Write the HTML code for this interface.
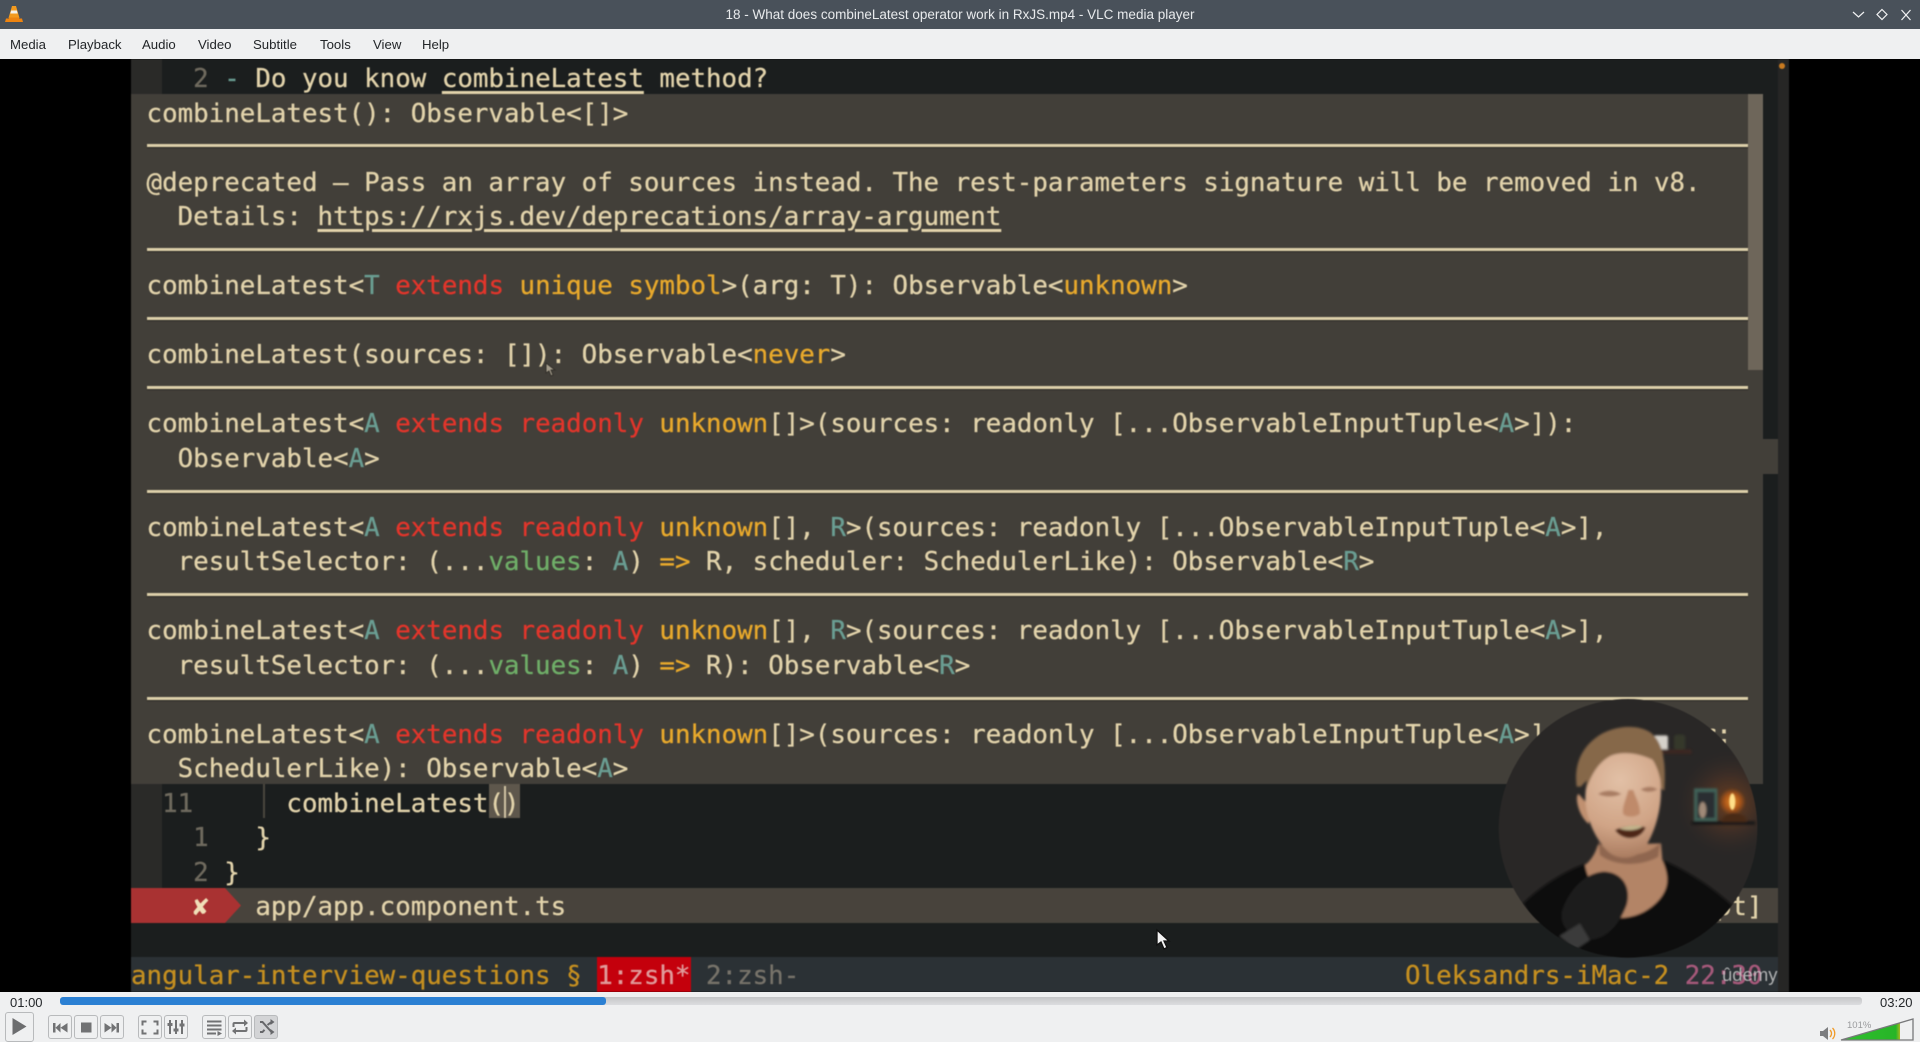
<!DOCTYPE html>
<html><head><meta charset="utf-8"><title>VLC media player</title>
<style>
html,body{margin:0;padding:0;width:1920px;height:1042px;overflow:hidden;background:#eff0f1}
body{position:relative;font-family:"Liberation Sans",sans-serif}
.abs{position:absolute}
#title{left:0;top:0;width:1920px;height:29px;background:#49515a;color:#e8eaec;font-size:13.5px;line-height:29px;text-align:center}
#menu{left:0;top:29px;width:1920px;height:30px;background:#eff0f1}
#menu span{position:absolute;top:1px;line-height:30px;font-size:13.2px;color:#232629}
#video{left:0;top:59px;width:1920px;height:933px;background:#000;overflow:hidden}
#vin{position:absolute;left:0;top:-59px;width:1920px;height:1042px;filter:blur(.4px)}
.r{position:absolute;left:131px;top:calc(62.3px + 34.5px*var(--i));height:34.5px;line-height:34.5px;white-space:pre;font-family:"DejaVu Sans Mono",monospace;font-size:25.82px;color:#e2d3ab;-webkit-text-stroke:.3px currentColor}
.ln{position:absolute;left:147px;width:1601px;height:3px;background:#dccfa9;box-shadow:0 1px 1px #2e2b25}
.d{color:#e2352b}.o{color:#e8a92c}.t{color:#6a9d92}.g{color:#6fae68}.u{text-decoration:underline;text-decoration-thickness:2.5px;text-underline-offset:4px}
.n{color:#6f6a5e}
.btn{position:absolute;top:1015px;height:22px;width:22px;border:1px solid #b8babc;border-radius:3px;background:#eff0f1;box-sizing:content-box}
.btn svg{display:block;width:22px;height:22px}
</style></head>
<body>
<div class="abs" id="title">18 - What does combineLatest operator work in RxJS.mp4 - VLC media player</div>
<svg class="abs" style="left:4px;top:4px" width="20" height="20" viewBox="0 0 20 20"><path d="M8 2h4l3.500 12h-11z" fill="#f39a1e"/><path d="M7.100 6.500h5.800l.8 3H6.300z" fill="#f4f1ea"/><path d="M2 14.500h3v-1h10v1h3l1 3.500H1z" fill="#ee8410"/></svg>
<svg class="abs" style="left:1846px;top:6px" width="72" height="18" viewBox="0 0 72 18" fill="none" stroke="#f2f3f4" stroke-width="1.200"><path d="M7 6l5.500 5 5.500-5"/><path d="M36 3.500l5 5-5 5-5-5z"/><path d="M55.500 4l9 10M64.500 4l-9 10"/></svg>
<div class="abs" id="menu"><span style="left:10px">Media</span><span style="left:68px">Playback</span><span style="left:142px">Audio</span><span style="left:198px">Video</span><span style="left:253px">Subtitle</span><span style="left:320px">Tools</span><span style="left:373px">View</span><span style="left:422px">Help</span></div>

<div class="abs" id="video"><div id="vin">
<div class="abs" style="left:131px;top:59px;width:1647px;height:933px;background:#1b1e1e"></div>
<div class="abs" style="left:1778px;top:59px;width:11px;height:933px;background:#262625"></div>
<div class="abs" style="left:131px;top:59px;width:31px;height:35px;background:#2a2a28"></div>
<div class="abs" style="left:131px;top:784px;width:31px;height:104px;background:#2a2a28"></div>
<div class="abs" style="left:131px;top:94px;width:1632px;height:690px;background:#423f39"></div>
<div class="abs" style="left:1763px;top:439px;width:15px;height:34.500px;background:#423f39"></div>
<div class="abs" style="left:1748px;top:94px;width:15px;height:276px;background:#6e665a"></div>
<div class="abs" style="left:1779px;top:63px;width:6px;height:6px;border-radius:50%;background:#c87a20"></div>

<div class="ln" style="top:144px"></div><div class="ln" style="top:248px"></div><div class="ln" style="top:317px"></div><div class="ln" style="top:386px"></div><div class="ln" style="top:490px"></div><div class="ln" style="top:593px"></div><div class="ln" style="top:697px"></div>

<div class="r" style="--i:0"><span class="n">    2 </span><span style="color:#6a9d92">-</span> Do you know <span class="u">combineLatest</span> method?</div>
<div class="r" style="--i:1"> combineLatest(): Observable&lt;[]&gt;</div>
<div class="r" style="--i:3"> @deprecated — Pass an array of sources instead. The rest-parameters signature will be removed in v8.</div>
<div class="r" style="--i:4">   Details: <span class="u">https://rxjs.dev/deprecations/array-argument</span></div>
<div class="r" style="--i:6"> combineLatest&lt;<span class="t">T</span> <span class="d">extends</span> <span class="o">unique symbol</span>&gt;(arg: T): Observable&lt;<span class="o">unknown</span>&gt;</div>
<div class="r" style="--i:8"> combineLatest(sources: []): Observable&lt;<span class="o">never</span>&gt;</div>
<div class="r" style="--i:10"> combineLatest&lt;<span class="t">A</span> <span class="d">extends</span> <span class="d">readonly</span> <span class="o">unknown</span>[]&gt;(sources: readonly [...ObservableInputTuple&lt;<span class="t">A</span>&gt;]):</div>
<div class="r" style="--i:11">   Observable&lt;<span class="t">A</span>&gt;</div>
<div class="r" style="--i:13"> combineLatest&lt;<span class="t">A</span> <span class="d">extends</span> <span class="d">readonly</span> <span class="o">unknown</span>[], <span class="t">R</span>&gt;(sources: readonly [...ObservableInputTuple&lt;<span class="t">A</span>&gt;],</div>
<div class="r" style="--i:14">   resultSelector: (...<span class="g">values</span>: <span class="t">A</span>) <span class="o">=&gt;</span> R, scheduler: SchedulerLike): Observable&lt;<span class="t">R</span>&gt;</div>
<div class="r" style="--i:16"> combineLatest&lt;<span class="t">A</span> <span class="d">extends</span> <span class="d">readonly</span> <span class="o">unknown</span>[], <span class="t">R</span>&gt;(sources: readonly [...ObservableInputTuple&lt;<span class="t">A</span>&gt;],</div>
<div class="r" style="--i:17">   resultSelector: (...<span class="g">values</span>: <span class="t">A</span>) <span class="o">=&gt;</span> R): Observable&lt;<span class="t">R</span>&gt;</div>
<div class="r" style="--i:19"> combineLatest&lt;<span class="t">A</span> <span class="d">extends</span> <span class="d">readonly</span> <span class="o">unknown</span>[]&gt;(sources: readonly [...ObservableInputTuple&lt;<span class="t">A</span>&gt;], scheduler:</div>
<div class="r" style="--i:20">   SchedulerLike): Observable&lt;<span class="t">A</span>&gt;</div>

<div class="abs" style="left:263px;top:784px;width:1.500px;height:34px;background:#4a463e"></div>
<div class="abs" style="left:489px;top:784px;width:31px;height:34px;background:#5e574c"></div>
<div class="r" style="--i:21"><span class="n">  11</span>      combineLatest()</div>
<div class="abs" style="left:503.500px;top:786px;width:2px;height:32px;background:#cfc3a3"></div>
<div class="r" style="--i:22"><span class="n">    1</span>   }</div>
<div class="r" style="--i:23"><span class="n">    2</span> }</div>

<div class="abs" style="left:131px;top:888px;width:1647px;height:34.500px;background:#48433c"></div>
<svg class="abs" style="left:131px;top:888px" width="110" height="35"><path d="M0 0H94L110 17.500 94 35H0z" fill="#a93232"/></svg>
<div class="r" style="--i:24">    <b style="color:#f0dfb8">✘</b>   app/app.component.ts</div>
<div class="r" style="--i:24;left:1576px">[typescript]</div>

<div class="abs" style="left:131px;top:957px;width:1647px;height:35px;background:#2b3135"></div>
<div class="abs" style="left:597px;top:957px;width:94px;height:35px;background:#c4000c"></div>
<div class="r" style="--i:26;color:#c58f20">angular-interview-questions § <span style="color:#e09a9a">1:zsh*</span> <span style="color:#77736a">2:zsh-</span></div>
<div class="r" style="--i:26;left:1405px;color:#c58f20">Oleksandrs-iMac-2 <span style="color:#a5597a">22:30</span></div>
<div class="abs" style="left:1722px;top:961px;font-size:18.500px;line-height:28px;color:#cfcfcf;opacity:.8">ûdemy</div>

<!-- presenter -->
<svg class="abs" style="left:1480px;top:690px" width="320" height="280" viewBox="0 0 960 840">
<defs>
<clipPath id="c"><circle cx="444" cy="415" r="388"/></clipPath>
<radialGradient id="gl" cx="750" cy="340" r="170" gradientUnits="userSpaceOnUse"><stop offset="0" stop-color="#6a3e20"/><stop offset=".5" stop-color="#3e2e26"/><stop offset="1" stop-color="#292726" stop-opacity="0"/></radialGradient>
<radialGradient id="fl" cx="757" cy="335" r="40" gradientUnits="userSpaceOnUse"><stop offset="0" stop-color="#e88a2a"/><stop offset=".6" stop-color="#a85418"/><stop offset="1" stop-color="#a85418" stop-opacity="0"/></radialGradient>
<radialGradient id="sk" cx="420" cy="270" r="240" gradientUnits="userSpaceOnUse"><stop offset="0" stop-color="#e2c0a6"/><stop offset=".6" stop-color="#d0a486"/><stop offset="1" stop-color="#a87a5e"/></radialGradient>
<filter id="b"><feGaussianBlur stdDeviation="3.500"/></filter>
<filter id="b2"><feGaussianBlur stdDeviation="2"/></filter>
</defs>
<g clip-path="url(#c)">
<rect width="960" height="840" fill="#292726"/>
<rect width="960" height="840" fill="url(#gl)"/>
<g filter="url(#b)">
<rect x="522" y="136" width="42" height="44" rx="6" fill="#d6d2ca"/>
<rect x="582" y="134" width="34" height="46" rx="8" fill="#34382c"/>
<rect x="535" y="178" width="100" height="14" fill="#3a2820"/>
<rect x="642" y="295" width="70" height="98" fill="#3f6258"/>
<rect x="652" y="306" width="52" height="78" fill="#2b2f30"/>
<ellipse cx="668" cy="360" rx="11" ry="24" fill="#a08a78"/>
<rect x="635" y="394" width="190" height="10" fill="#191513"/>
<circle cx="757" cy="335" r="40" fill="url(#fl)"/>
<path d="M725 392c8-26 52-34 75-4v8h-75z" fill="#4a2a18"/>
<path d="M130 640c50-50 130-100 185-118l232-12c70 30 150 80 213 140L600 860 250 860z" fill="#0b0a0a"/>
<path d="M315 525c12-8 30-30 38-60l190-5 4 50c22 50 22 90-20 130-30 28-65 42-107 44-50-40-95-100-105-159z" fill="#b38466"/>
<path d="M355 455c40 50 130 55 185 5l-5 40c-50 30-130 30-175-5z" fill="#8f6650"/>
<path d="M290 290c-8-60 10-110 55-145 50-40 130-45 170-15 32 28 44 80 38 170-6 10-50-60-60-70-60-20-130-10-190 60z" fill="#86684a"/>
<path d="M296 312c-12 2-4 62 30 90l10-45z" fill="#c09070"/>
<path d="M316 330c0-80 25-140 95-166 60-10 112 20 130 105 8 70-10 150-50 210-32 32-80 32-110 3-40-42-62-100-65-152z" fill="url(#sk)"/>
<path d="M318 300c2-60 28-115 90-138 50-8 90 8 115 50-40-22-95-30-130-15-40 20-60 60-75 103z" fill="#86684a"/>
<path d="M354 312c22-14 50-12 70 0-20 10-50 10-70 0zM482 298c18-10 38-10 50 0-16 10-36 10-50 0z" fill="#a87c62"/>
<path d="M445 300c-8 30-20 55-15 72 10 12 40 10 50-2 0-30-15-50-20-70z" fill="#bf8a6a"/>
<path d="M405 420c30-14 65-16 92-8-8 22-30 34-52 32-18-2-32-12-40-24z" fill="#4d2618"/>
<path d="M418 415c25-8 48-10 70-6-12 12-50 16-70 6z" fill="#c2b48c"/>
<path d="M245 665c15-50 60-115 125-120 55 0 85 45 70 100-25 65-60 100-112 105-60-5-90-45-83-85z" fill="#1c1b1a"/>
<path d="M238 738l62-38 30 50-42 28z" fill="#3a3a3a"/>
<path d="M175 668l75 42-12 28-75-50zM285 780l45-30 30 60-55 20z" fill="#0a0a0a"/>
</g>
<g filter="url(#b2)"><ellipse cx="757" cy="335" rx="9" ry="25" fill="#ffe08a"/></g>
</g>
</svg>
<svg class="abs" style="left:545px;top:362px;opacity:.7" width="14" height="16" viewBox="0 0 14 16"><path d="M1 1v10l3-2 2 5 2-1-2-5h4z" fill="#cfc6b0" stroke="#2e2b25"/></svg>
</div></div>

<svg class="abs" style="left:1155px;top:928px" width="18" height="24" viewBox="0 0 18 24"><path d="M2 2v15l4-3 3 7 3-1.500-3-6.500h5z" fill="#f3f3f3" stroke="#111" stroke-width="1.300"/></svg>

<div class="abs" style="left:10px;top:994px;font-size:13px;line-height:17px;color:#232629">01:00</div>
<div class="abs" style="left:60px;top:997px;width:1802px;height:8px;border-radius:3px;background:linear-gradient(#c5c6c8,#dcdde0)"></div>
<div class="abs" style="left:60px;top:997px;width:546px;height:8px;border-radius:3px;background:#2b80d3"></div>
<div class="abs" style="left:1880px;top:994px;font-size:13px;line-height:17px;color:#232629">03:20</div>

<div class="abs" style="left:5px;top:1012px;width:27px;height:28px;border:1px solid #b8babc;border-radius:3px"></div>
<svg class="abs" style="left:12px;top:1018px" width="15" height="17"><path d="M.5 0l14 8.500L.5 17z" fill="#6c6d6f"/></svg>

<div class="btn" style="left:48px"><svg viewBox="0 0 22 22" fill="#717274"><path d="M4 7h2.500v9.500H4zM11.500 7v9.500L6.500 11.750zM18.500 7v9.500l-7-4.750z"/></svg></div>
<div class="btn" style="left:74px"><svg viewBox="0 0 22 22" fill="#717274"><path d="M6 6.500h10.500v10H6z"/></svg></div>
<div class="btn" style="left:100px"><svg viewBox="0 0 22 22" fill="#717274"><path d="M3.500 7l7 4.750-7 4.750zM10.500 7l5 4.750-5 4.750zM15.500 7H18v9.500h-2.500z"/></svg></div>
<div class="btn" style="left:138px"><svg viewBox="0 0 22 22" fill="none" stroke="#717274" stroke-width="2"><path d="M3.500 9.500V5.500h4M14.500 5.500h4v4M18.500 13.500v4h-4M7.500 17.500h-4v-4"/></svg></div>
<div class="btn" style="left:164px"><svg viewBox="0 0 22 22" fill="none" stroke="#717274" stroke-width="2"><path d="M5 4v14M11 4v14M17 4v14"/><path d="M2.500 8.500h5M8.500 14h5M14.500 9h5" stroke-width="3"/></svg></div>
<div class="btn" style="left:202px"><svg viewBox="0 0 22 22" fill="none" stroke="#717274" stroke-width="2"><path d="M4 5.500h14.500M4 9.500h14.500M4 13.500h14.500M4 17.500h9"/><path d="M14.500 15l4.500 2.500-4.500 2.500z" fill="#717274" stroke="none"/></svg></div>
<div class="btn" style="left:228px"><svg viewBox="0 0 22 22" fill="none" stroke="#717274" stroke-width="2"><path d="M4.500 11V8a1 1 0 0 1 1-1h10M17.500 11v3a1 1 0 0 1-1 1h-10"/><path d="M15 3.500l4 3.500-4 3.500zM7 11.500L3 15l4 3.500z" fill="#717274" stroke="none"/></svg></div>
<div class="btn" style="left:254px;background:#d3d4d6"><svg viewBox="0 0 22 22" fill="none" stroke="#66676a" stroke-width="2"><path d="M5 6h2.500l9 10M5 16h2.500l2-2.200M12.500 9l4-3"/><path d="M15.500 3l4 3-4 3zM15.500 13l4 3-4 3z" fill="#66676a" stroke="none"/></svg></div>

<svg class="abs" style="left:1819px;top:1025px" width="18" height="17" viewBox="0 0 18 17"><path d="M1 6h3l5-4v13l-5-4H1z" fill="#7c7d7f"/><path d="M11 5c2 2 2 5 0 7M13.500 3c3 3 3 8 0 11" fill="none" stroke="#f09a28" stroke-width="1.300"/></svg>
<div class="abs" style="left:1847px;top:1020px;font-size:9.500px;line-height:12px;color:#9a9b9d">101%</div>
<svg class="abs" style="left:1839px;top:1017px" width="76" height="25" viewBox="0 0 76 25"><defs><linearGradient id="vg" x1="0" x2="1" y1="0" y2="0"><stop offset="0" stop-color="#2fbf2f"/><stop offset=".93" stop-color="#27b527"/><stop offset="1" stop-color="#a8b820"/></linearGradient></defs><path d="M2 23L61 5.800V23z" fill="url(#vg)"/><path d="M2 23L74 2v21z" fill="none" stroke="#77787a" stroke-width="1.300"/></svg>
</body></html>
